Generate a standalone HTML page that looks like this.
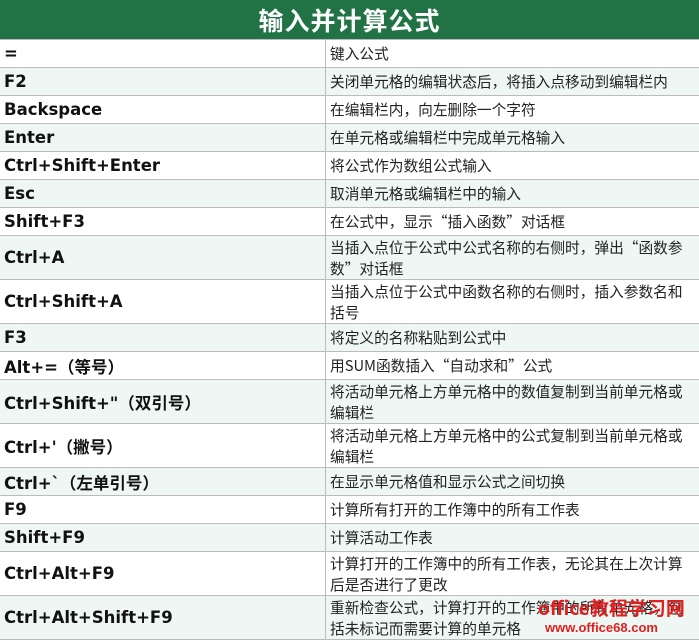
<!DOCTYPE html>
<html><head><meta charset="utf-8"><style>
body{margin:0;width:699px;height:640px;overflow:hidden;background:#fff;font-family:"Liberation Sans","Noto Sans CJK SC",sans-serif;position:relative}
.h{height:40px;background:#217346;color:#fff;text-align:center;font:bold 25px/40px "Noto Sans CJK SC",sans-serif;letter-spacing:1px;border-bottom:1px solid #bbb;box-sizing:border-box}
.r{display:flex;border-bottom:1px solid #bbb;box-sizing:border-box;height:28px}
.r.d{height:44px}
.r.t{background:#eef7f3}
.k{width:326px;border-right:1px solid #bbb;box-sizing:border-box;padding-left:4px;display:flex;align-items:center;font-weight:bold;font-size:16.5px;font-family:"DejaVu Sans","Noto Sans CJK SC",sans-serif;color:#111}
.v{flex:1;padding:0 8px 0 4px;display:flex;align-items:center;font-size:14.7px;line-height:21px;font-family:"Noto Sans CJK SC",sans-serif;color:#222}
</style></head><body>
<div class="h">输入并计算公式</div>
<div class="r"><div class="k">=</div><div class="v">键入公式</div></div>
<div class="r t"><div class="k">F2</div><div class="v">关闭单元格的编辑状态后，将插入点移动到编辑栏内</div></div>
<div class="r"><div class="k">Backspace</div><div class="v">在编辑栏内，向左删除一个字符</div></div>
<div class="r t"><div class="k">Enter</div><div class="v">在单元格或编辑栏中完成单元格输入</div></div>
<div class="r"><div class="k">Ctrl+Shift+Enter</div><div class="v">将公式作为数组公式输入</div></div>
<div class="r t"><div class="k">Esc</div><div class="v">取消单元格或编辑栏中的输入</div></div>
<div class="r"><div class="k">Shift+F3</div><div class="v">在公式中，显示“插入函数”对话框</div></div>
<div class="r d t"><div class="k">Ctrl+A</div><div class="v">当插入点位于公式中公式名称的右侧时，弹出“函数参<br>数”对话框</div></div>
<div class="r d"><div class="k">Ctrl+Shift+A</div><div class="v">当插入点位于公式中函数名称的右侧时，插入参数名和<br>括号</div></div>
<div class="r t"><div class="k">F3</div><div class="v">将定义的名称粘贴到公式中</div></div>
<div class="r"><div class="k">Alt+=（等号）</div><div class="v">用SUM函数插入“自动求和”公式</div></div>
<div class="r d t"><div class="k">Ctrl+Shift+"（双引号）</div><div class="v">将活动单元格上方单元格中的数值复制到当前单元格或<br>编辑栏</div></div>
<div class="r d"><div class="k">Ctrl+'（撇号）</div><div class="v">将活动单元格上方单元格中的公式复制到当前单元格或<br>编辑栏</div></div>
<div class="r t"><div class="k">Ctrl+`（左单引号）</div><div class="v">在显示单元格值和显示公式之间切换</div></div>
<div class="r"><div class="k">F9</div><div class="v">计算所有打开的工作簿中的所有工作表</div></div>
<div class="r t"><div class="k">Shift+F9</div><div class="v">计算活动工作表</div></div>
<div class="r d"><div class="k">Ctrl+Alt+F9</div><div class="v">计算打开的工作簿中的所有工作表，无论其在上次计算<br>后是否进行了更改</div></div>
<div class="r d t"><div class="k">Ctrl+Alt+Shift+F9</div><div class="v">重新检查公式，计算打开的工作簿中的所有单元格，包<br>括未标记而需要计算的单元格</div></div>
<div style="position:absolute;left:538px;top:597px;color:#e02020;font:bold 19px/22px 'Noto Sans CJK SC',sans-serif">office教程学习网</div>
<div style="position:absolute;left:545px;top:620px;color:#e02020;font:bold 13px/16px 'Liberation Sans',sans-serif">www.office68.com</div>
</body></html>
